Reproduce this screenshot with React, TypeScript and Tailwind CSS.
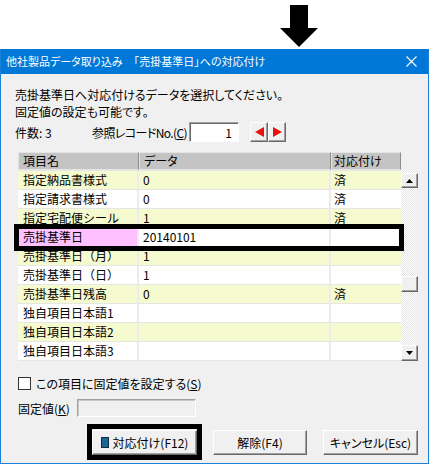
const ROWS = [
  { name: "指定納品書様式", data: "0", done: true },
  { name: "指定請求書様式", data: "0", done: true },
  { name: "指定宅配便シール", data: "1", done: true },
  { name: "売掛基準日", data: "20140101", done: false, current: true },
  { name: "売掛基準日（月）", data: "1", done: false },
  { name: "売掛基準日（日）", data: "1", done: false },
  { name: "売掛基準日残高", data: "0", done: true },
  { name: "独自項目日本語1", data: "", done: false },
  { name: "独自項目日本語2", data: "", done: false },
  { name: "独自項目日本語3", data: "", done: false },
];

const raised =
  "border border-t-white border-l-white border-r-[#696969] border-b-[#696969] shadow-[inset_-1px_-1px_#a0a0a0] bg-[#f0f0f0]";

export default function App() {
  return (
    <div className="w-[430px] h-[465px] bg-white font-['Noto_Sans_CJK_JP',sans-serif] text-[12px] text-black [font-feature-settings:'palt'] overflow-hidden">
      {/* annotation arrow */}
      <div className="h-[49px] pl-[280px] pt-[5px]">
        <svg width="38" height="42" viewBox="0 0 38 42">
          <path d="M10 0h18v23h10L19 42 0 23h10z" fill="#000" />
        </svg>
      </div>

      <div className="w-[429px] h-[415px] border-x border-b border-[#1a80d8] flex flex-col">
        <div className="h-[25px] bg-[#0078d7] flex items-center justify-between pl-[5px] pr-[11px] text-white">
          <span className="text-[11px] leading-none">他社製品データ取り込み　「売掛基準日」への対応付け</span>
          <svg width="11" height="11" viewBox="0 0 11 11">
            <path d="M0.5 0.5l10 10M10.5 0.5l-10 10" stroke="#fff" strokeWidth="1.1" />
          </svg>
        </div>

        <div className="flex-1 bg-[#f0f0f0] flex flex-col pl-[14px] pt-[12px] leading-[17px]">
          <p>売掛基準日へ対応付けるデータを選択してください。</p>
          <p>固定値の設定も可能です。</p>

          <div className="mt-[2px] h-[20px] flex items-center whitespace-nowrap">
            <span className="w-[77px] shrink-0">件数: 3</span>
            <span className="w-[97px] shrink-0 tracking-[-0.6px]">
              参照レコードNo.(<span className="underline">C</span>)
            </span>
            <div className="w-[50px] h-[20px] bg-white border border-t-[#a0a0a0] border-l-[#a0a0a0] border-r-white border-b-white shadow-[inset_1px_1px_#696969] flex items-center justify-end pr-[6px]">
              1
            </div>
            <div className="ml-[11px] flex">
              <div className={`${raised} w-[18px] h-[20px] flex items-center justify-center`}>
                <svg width="9" height="10" viewBox="0 0 9 10">
                  <path d="M9 0v10L0 5z" fill="#e81010" />
                </svg>
              </div>
              <div className={`${raised} w-[18px] h-[20px] flex items-center justify-center`}>
                <svg width="9" height="10" viewBox="0 0 9 10">
                  <path d="M0 0v10l9-5z" fill="#e81010" />
                </svg>
              </div>
            </div>
          </div>

          {/* grid */}
          <div className="relative mt-[10px] ml-[3px] w-[400px]">
            <div className="flex h-[18px] leading-[16px]">
              <div className="w-[121px] bg-[#c4c4c4] border border-[#e4e4e4] border-r-[#8c8c8c] pl-[4px]">項目名</div>
              <div className="w-[192px] bg-[#c4c4c4] border border-[#e4e4e4] border-r-[#8c8c8c] pl-[4px]">データ</div>
              <div className="w-[70px] bg-[#c4c4c4] border border-[#e4e4e4] border-r-[#8c8c8c] pl-[2px]">対応付け</div>
            </div>
            <div className="flex">
              <div className="w-[383px] flex flex-col border-b border-[#e6e6e6] [font-feature-settings:normal]">
                {ROWS.map((r, i) => {
                  const bg = i % 2 === 0 ? "bg-[#f6fbcf]" : "bg-white";
                  return (
                    <div key={r.name} className={`flex h-[19px] leading-[18px] border-t border-[#e6e6e6] whitespace-nowrap ${bg}`}>
                      <div className={`w-[121px] pl-[5px] border-r-2 border-[#ececec] ${r.current ? "bg-[#ffc0ff]" : ""}`}>
                        {r.name}
                      </div>
                      <div className={`w-[192px] pl-[4px] border-r-2 border-[#ececec] ${r.current ? "bg-white" : ""}`}>
                        {r.data}
                      </div>
                      <div className={`flex-1 pl-[3px] ${r.current ? "bg-white" : ""}`}>{r.done ? "済" : ""}</div>
                    </div>
                  );
                })}
              </div>
              <div className="w-[17px] flex flex-col bg-[repeating-conic-gradient(#e4e4e4_0%_25%,#ffffff_0%_50%)] bg-[length:2px_2px]">
                <div className={`${raised} mt-[3px] h-[15px] flex items-center justify-center`}>
                  <svg width="7" height="4" viewBox="0 0 7 4">
                    <path d="M3.5 0L7 4H0z" fill="#000" />
                  </svg>
                </div>
                <div className="h-[88px]" />
                <div className={`${raised} h-[16px]`} />
                <div className="flex-1" />
                <div className={`${raised} h-[16px] flex items-center justify-center`}>
                  <svg width="7" height="4" viewBox="0 0 7 4">
                    <path d="M0 0h7L3.5 4z" fill="#000" />
                  </svg>
                </div>
              </div>
            </div>
            {/* highlight frame */}
            <div className="absolute left-[-4px] top-[72px] w-[390px] h-[27px] border-[5px] border-black pointer-events-none" />
          </div>

          <div className="mt-[16px] ml-[3px] h-[13px] flex items-center gap-[5px]">
            <div className="w-[13px] h-[13px] bg-white border border-[#333]" />
            <span>
              この項目に固定値を設定する(<span className="underline">S</span>)
            </span>
          </div>

          <div className="mt-[9px] ml-[3px] h-[18px] flex items-center">
            <span className="w-[59px]">
              固定値(<span className="underline">K</span>)
            </span>
            <div className="w-[119px] h-[18px] bg-[#f0f0f0] border border-t-[#a0a0a0] border-l-[#a0a0a0] border-r-white border-b-white shadow-[inset_1px_1px_#c8c8c8]" />
          </div>

          <div className="mt-[13px] ml-[77px] flex h-[25px] gap-[16px]">
            <div className="relative">
              <div className="absolute left-[-5px] top-[-6px] w-[115px] h-[36px] border-[5px] border-black" />
              <div className={`${raised} w-[105px] h-[25px] flex items-center justify-center gap-[4px]`}>
                <span className="w-[8px] h-[11px] bg-[#1f6496] border border-[#0c2c44]" />
                <span>対応付け(F12)</span>
              </div>
            </div>
            <div className={`${raised} w-[94px] h-[25px] flex items-center justify-center`}>解除(F4)</div>
            <div className={`${raised} w-[95px] h-[25px] flex items-center justify-center`}>キャンセル(Esc)</div>
          </div>
        </div>
      </div>
    </div>
  );
}
